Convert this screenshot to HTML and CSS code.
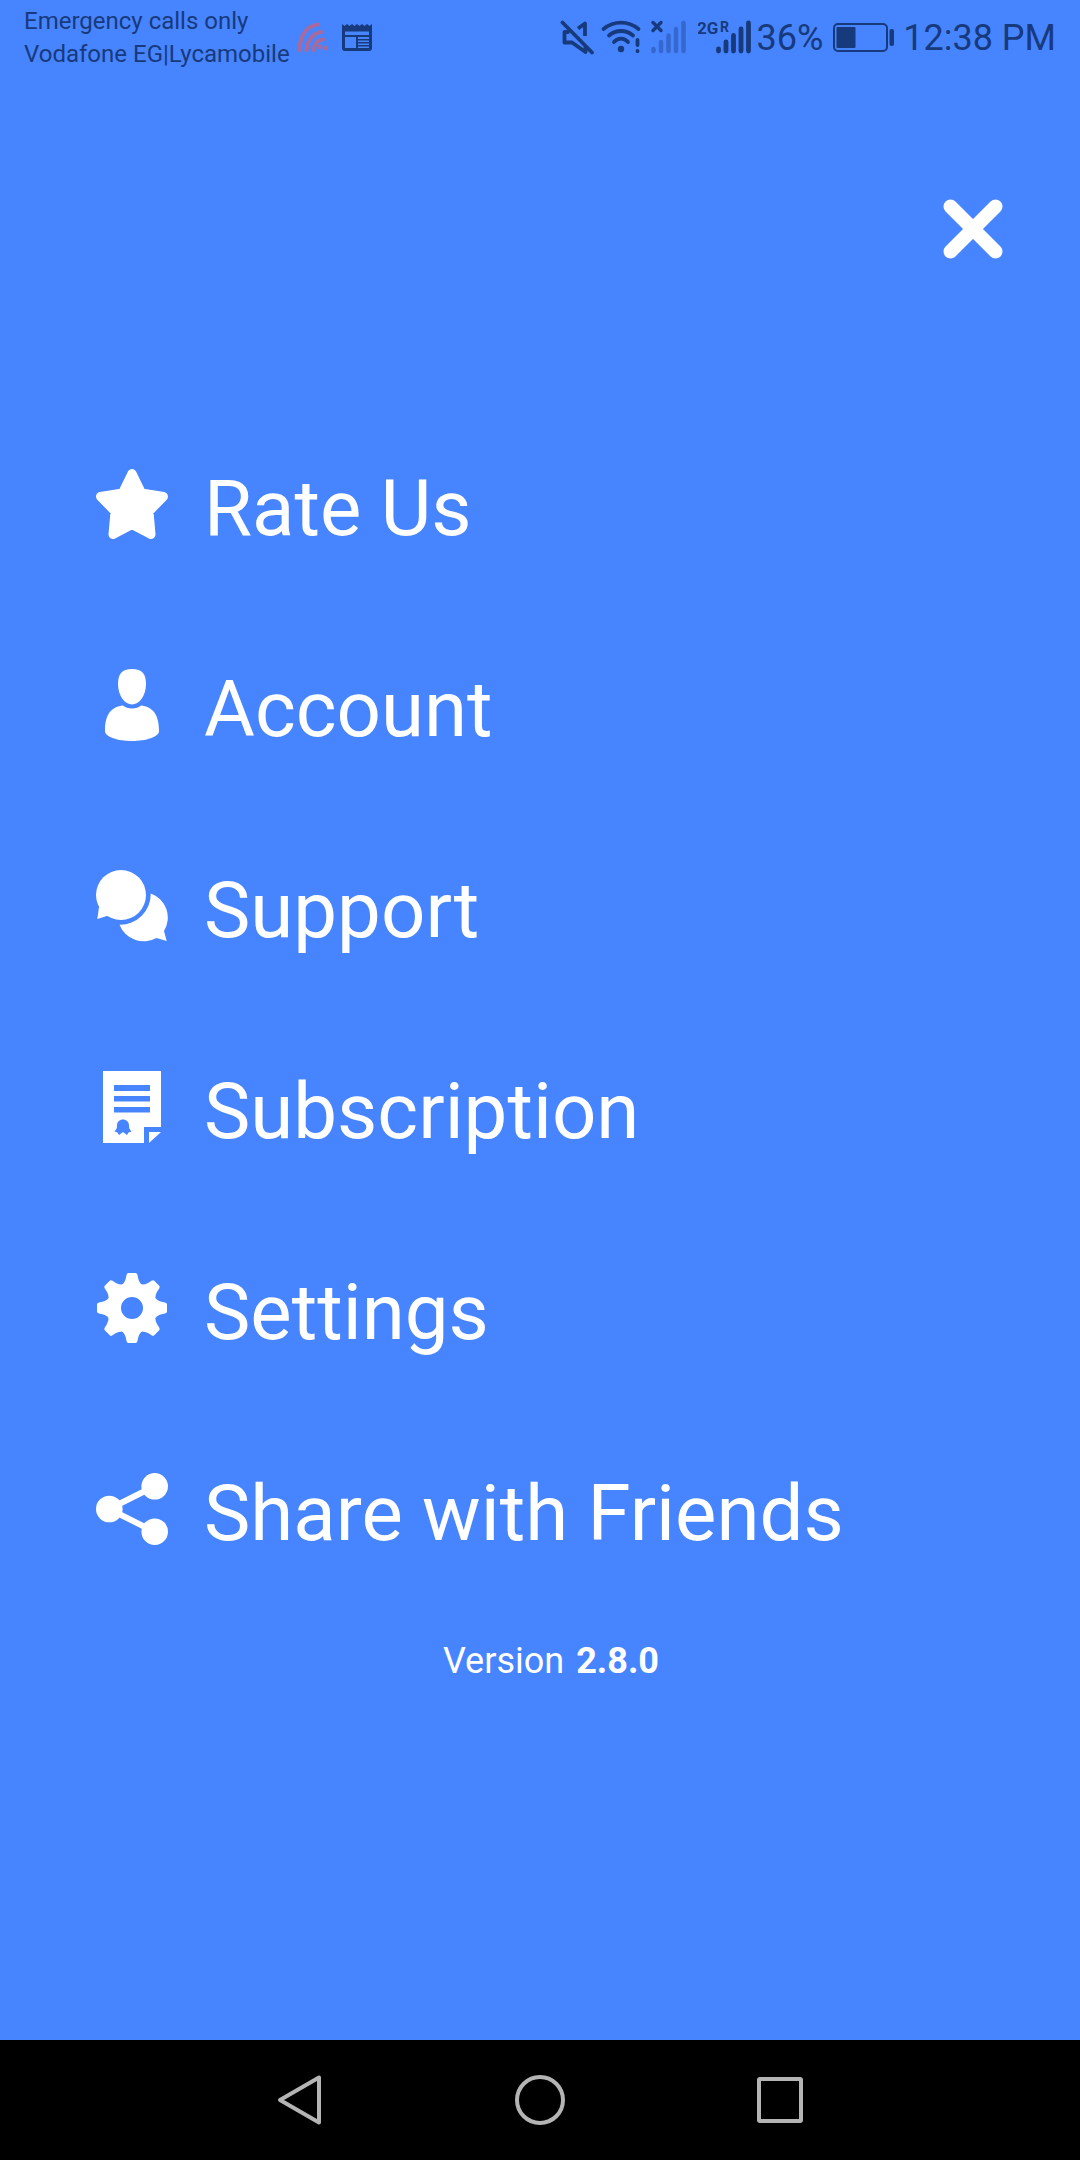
FILE: index.html
```html
<!DOCTYPE html>
<html lang="en">
<head>
<meta charset="utf-8">
<meta name="viewport" content="width=device-width, initial-scale=1">
<title>Menu</title>
<link rel="stylesheet" href="styles.css">
</head>
<body>
<div class="screen">
  <header class="status">
    <div class="carrier">
      <span>Emergency calls only</span>
      <span>Vodafone EG|Lycamobile</span>
    </div>
    <svg class="cast" width="32" height="36" viewBox="0 0 32 36" aria-hidden="true">
      <g fill="none" stroke="#a86a9c" stroke-width="4.2" stroke-linecap="round">
        <path d="M1.500 31C2 16 9 7 20 5.500"/>
        <path d="M8.500 31C9 22 15 14 23 13"/>
        <path d="M15.500 31C16 26 19 21 25 20.500"/>
      </g>
      <circle cx="22" cy="28" r="2.400" fill="#a86a9c"/>
      <circle cx="27.500" cy="29" r="2.400" fill="#a86a9c"/>
    </svg>
    <svg class="news" width="32" height="36" viewBox="0 0 32 36" aria-hidden="true">
      <path fill="#173a7c" fill-rule="evenodd" d="M0 5l2.500 2 2.500-2 2.500 2 2.500-2 2.500 2 2.500-2 2.500 2 2.500-2 2.500 2 2.500-2 2.500 2L30 5V29q0 3-3 3H3q-3 0-3-3ZM3 12.500V16H27V12.500ZM3 18V29H14V18ZM16 18V20H27V18ZM16 21.500V23H27V21.500ZM16 24.500V26H27V24.500ZM16 27.500V29H27V27.500Z"/>
    </svg>
    <div class="system">
      <svg width="36" height="36" viewBox="0 0 36 36" aria-hidden="true">
        <g fill="none" stroke="#173a7c" stroke-width="3.8" stroke-linecap="round" stroke-linejoin="round">
          <path d="M2.500 3.500L32 33.500"/>
          <path d="M18 9.500L25 4.500V17" stroke-linecap="butt"/>
          <path d="M8 13H4.500V23.500H12L25.500 33V28"/>
        </g>
      </svg>
      <svg class="wifi" width="44" height="36" viewBox="0 0 44 36" aria-hidden="true">
        <g fill="none" stroke="#173a7c" stroke-width="3.8" stroke-linecap="round">
          <path d="M3.500 10C14 1.500 28 1.500 38.500 10"/>
          <path d="M9 16.500C16 10.500 26 10.500 33 16.500"/>
          <path d="M14 23C18 18.500 24 18.500 28 23"/>
          <path d="M37.500 21V26M37.500 32V32.200"/>
        </g>
        <circle cx="21" cy="30" r="3.200" fill="#173a7c"/>
      </svg>
      <svg class="sim-one" width="38" height="36" viewBox="0 0 38 36" aria-hidden="true">
        <path d="M3 3.500L11 11.500M11 3.500L3 11.500" stroke="#173a7c" stroke-width="3.4" stroke-linecap="round"/>
        <path d="M3.500 30V32M11 23V32M18.500 16.500V32M26 10V32M33.500 4V32" stroke="#3567cc" stroke-width="4.400" stroke-linecap="round"/>
      </svg>
      <svg class="sim-two" width="56" height="36" viewBox="0 0 56 36" role="img" aria-label="2G roaming">
        <text class="net" x="-1" y="15">2G</text>
        <text class="roam" x="22" y="13">R</text>
        <path d="M20.500 30V32M28 23V32M35.500 16.500V32M43 10V32M50.500 4V32" stroke="#173a7c" stroke-width="4.800" stroke-linecap="round"/>
      </svg>
      <span class="percent">36%</span>
      <svg class="battery" width="62" height="36" viewBox="0 0 62 36" aria-hidden="true">
        <rect x="1" y="5" width="53" height="27" rx="4" fill="none" stroke="#173a7c" stroke-width="2"/>
        <rect x="3.500" y="8" width="19" height="21" rx="1" fill="#173a7c"/>
        <rect x="56.500" y="10" width="4.500" height="17" rx="2" fill="#173a7c"/>
      </svg>
      <time class="clock">12:38 PM</time>
    </div>
  </header>

  <main class="menu">
    <div class="top">
      <button class="close" type="button" aria-label="Close">
        <svg width="60" height="60" viewBox="0 0 60 60"><path d="M7.500 7.500L52.500 52.500M52.500 7.500L7.500 52.500" stroke="#fff" stroke-width="14" stroke-linecap="round"/></svg>
      </button>
    </div>

    <nav class="items" aria-label="Main menu">
      <a class="item" href="#rate">
        <svg class="icon" viewBox="0 0 72 72"><path d="M36 5.500L26.500 25L4.500 28.500L19 43.500L17 66.500L36 56.500L55 66.500L53 43.500L67.500 28.500L45.500 25Z" fill="#fff" stroke="#fff" stroke-width="9" stroke-linejoin="round"/></svg>
        <span>Rate Us</span>
      </a>
      <a class="item" href="#account">
        <svg class="icon" viewBox="0 0 72 72" fill="#fff"><path d="M36 0C46 0 50 5 50 15C50 27 43 35.500 36 35.500S22 27 22 15C22 5 26 0 36 0Z"/><path d="M27 36.500C31 40.500 41 40.500 45 36.500C56 38 63 44 63 62C63 68 50 72 36 72S9 68 9 62C9 44 16 38 27 36.500Z"/></svg>
        <span>Account</span>
      </a>
      <a class="item" href="#support">
        <svg class="icon" viewBox="0 0 72 72" fill="#fff"><circle cx="25" cy="25" r="25"/><path d="M3 37L1.300 49L14 45Z"/><path d="M54.700 23.500A25.500 25.500 0 0 1 68 61L70.700 71L60.500 68A26 26 0 0 1 23.500 54.700A30.500 30.500 0 0 0 54.700 23.500Z"/></svg>
        <span>Support</span>
      </a>
      <a class="item" href="#subscription">
        <svg class="icon" viewBox="0 0 72 72"><path fill="#fff" fill-rule="evenodd" d="M7 0H65V56H48V72H7ZM18 14V20H54V14ZM18 25V30.500H54V25ZM18 36V41.500H54V36ZM27 48.500C23.500 48.500 21 51 21 54.500C21 57 20.500 58.500 18.500 60.500L21.500 61.500L23 64L27 61L31 64L32.500 61.500L35.500 60.500C33.500 58.500 33 57 33 54.500C33 51 30.500 48.500 27 48.500Z"/><path fill="#fff" d="M53 61H65L53 72Z"/></svg>
        <span>Subscription</span>
      </a>
      <a class="item" href="#settings">
        <svg class="icon" viewBox="0 0 72 72">
          <defs><path id="tooth" d="M24.500 14Q28.500 11.500 29.800 6.500L30.500 3Q31 1 32.500 1H39.500Q41 1 41.500 3L42.200 6.500Q43.500 11.500 47.500 14L36 20Z"/></defs>
          <circle cx="36" cy="36" r="18" fill="none" stroke="#fff" stroke-width="14"/>
          <g fill="#fff">
            <use href="#tooth"/><use href="#tooth" transform="rotate(45 36 36)"/><use href="#tooth" transform="rotate(90 36 36)"/><use href="#tooth" transform="rotate(135 36 36)"/><use href="#tooth" transform="rotate(180 36 36)"/><use href="#tooth" transform="rotate(225 36 36)"/><use href="#tooth" transform="rotate(270 36 36)"/><use href="#tooth" transform="rotate(315 36 36)"/>
          </g>
        </svg>
        <span>Settings</span>
      </a>
      <a class="item" href="#share">
        <svg class="icon" viewBox="0 0 72 72" fill="#fff"><path d="M59 13L13 36L59 59" fill="none" stroke="#fff" stroke-width="6"/><circle cx="13.300" cy="36" r="13.300"/><circle cx="58.700" cy="13.300" r="13.300"/><circle cx="58.700" cy="58.700" r="13.300"/></svg>
        <span>Share with Friends</span>
      </a>
    </nav>

    <p class="version"><span>Version</span> <strong>2.8.0</strong></p>
  </main>

  <footer class="navbar">
    <button type="button" aria-label="Back"><svg width="52" height="52" viewBox="0 0 52 52"><path d="M45 3.500V48.500L6 26Z"/></svg></button>
    <button type="button" aria-label="Home"><svg width="52" height="52" viewBox="0 0 52 52"><circle cx="26" cy="26" r="23"/></svg></button>
    <button type="button" aria-label="Recent apps"><svg width="52" height="52" viewBox="0 0 52 52"><rect x="5" y="5" width="42" height="42" rx="1"/></svg></button>
  </footer>
</div>
</body>
</html>
```
FILE: styles.css
```css
* {
  box-sizing: border-box;
}

body {
  margin: 0;
  background: #4784ff;
  color: #fff;
  font-family: Roboto, "Noto Sans", sans-serif;
}

button {
  display: flex;
  padding: 0;
  border: 0;
  background: none;
  cursor: pointer;
}

.screen {
  display: flex;
  flex-direction: column;
  min-height: 100vh;
}

/* Status bar */
.status {
  display: flex;
  align-items: center;
  height: 73px;
  padding: 0 24px;
  color: #173a7c;
}

.carrier {
  display: flex;
  flex-direction: column;
  height: 73px;
  padding-top: 5px;
  font-size: 24px;
  line-height: 33px;
  white-space: nowrap;
}

.cast {
  margin-left: 8px;
}

.news {
  margin-left: 12px;
}

.system {
  display: flex;
  align-items: center;
  margin-left: auto;
  font-size: 36px;
  line-height: 42px;
  white-space: nowrap;
}

.wifi {
  margin-left: 4px;
}

.sim-one {
  margin-left: 6px;
}

.sim-two {
  margin-left: 10px;
  fill: #173a7c;
}

.net {
  font-size: 17px;
  font-weight: 700;
}

.roam {
  font-size: 14px;
  font-weight: 700;
}

.percent {
  margin-left: 2px;
  padding-top: 2px;
}

.battery {
  margin-left: 10px;
}

.clock {
  margin-left: 8px;
  padding-top: 2px;
}

/* Menu */
.top {
  display: flex;
  justify-content: flex-end;
  padding: 126px 77px 0;
}

.items {
  display: flex;
  flex-direction: column;
  gap: 109px;
  padding: 204px 96px 0;
}

.item {
  display: flex;
  align-items: center;
  gap: 36px;
  color: inherit;
  font-size: 78px;
  line-height: 92px;
  text-decoration: none;
}

.icon {
  flex: none;
  width: 72px;
  height: 72px;
  margin-bottom: 10px;
}

.version {
  display: flex;
  justify-content: center;
  gap: 12px;
  margin: 80px 0;
  padding-left: 22px;
  font-size: 36px;
  line-height: 42px;
}

/* Navigation bar */
.navbar {
  display: flex;
  justify-content: center;
  align-items: center;
  gap: 188px;
  height: 120px;
  margin-top: auto;
  background: #000;
}

.navbar svg {
  fill: none;
  stroke: #b4b4b4;
  stroke-width: 4;
  stroke-linejoin: round;
}
```
